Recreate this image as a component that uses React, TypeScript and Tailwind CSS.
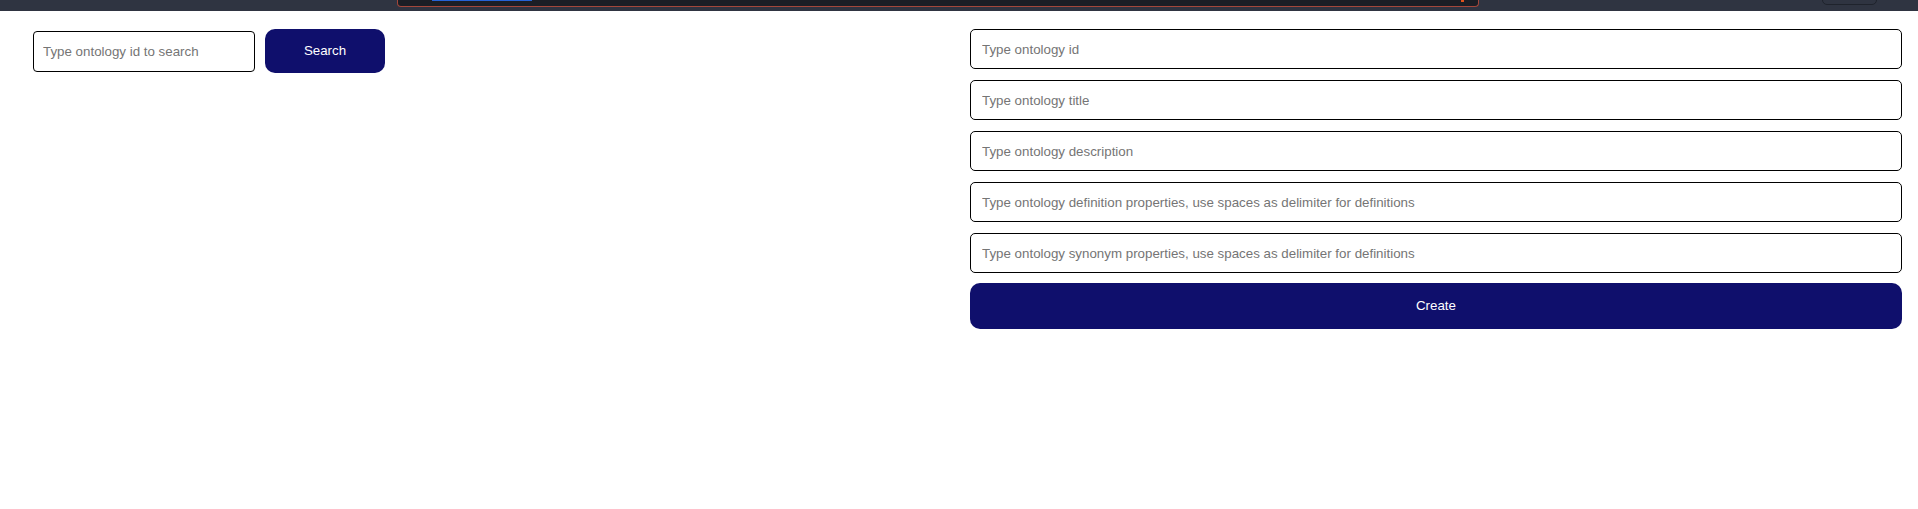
import React from "react";

const inputCls =
  "w-full h-[40px] border border-black rounded-[5px] px-[11px] text-[13.33px] text-black placeholder:text-[#757575] outline-none bg-white";

export default function App() {
  return (
    <div className="w-[1918px] h-[509px] bg-white font-['Liberation_Sans',Arial,sans-serif] overflow-hidden">
      <div className="relative h-[11px] bg-[#2f3441]">
        <div className="absolute left-[397px] top-0 w-[1082px] h-[7px] bg-[#1b1e25] border border-t-0 border-[#a3473b] rounded-b-[4px]">
          <div className="absolute left-[34px] top-0 w-[100px] h-[1px] bg-[#2563d6]" />
          <div className="absolute left-[1063px] top-0 w-[3px] h-[2px] bg-[#e0521c]" />
        </div>
        <div className="absolute left-[1822px] top-[-6px] w-[55px] h-[11px] border border-[#1f232c] rounded-[5px]" />
      </div>
      <div className="flex justify-between pl-[33px] pr-[16px] pt-[18px]">
        <div className="flex items-center gap-[10px] h-[44px]">
          <input
            className="w-[222px] h-[41px] border border-black rounded-[4px] px-[9px] text-[13.33px] placeholder:text-[#757575] outline-none"
            placeholder="Type ontology id to search"
          />
          <button className="w-[120px] h-[44px] rounded-[10px] bg-[#0f0f6c] text-white text-[13.33px]">
            Search
          </button>
        </div>
        <div className="w-[932px] flex flex-col gap-[11px]">
          <input className={inputCls} placeholder="Type ontology id" />
          <input className={inputCls} placeholder="Type ontology title" />
          <input className={inputCls} placeholder="Type ontology description" />
          <input
            className={inputCls}
            placeholder="Type ontology definition properties, use spaces as delimiter for definitions"
          />
          <input
            className={inputCls}
            placeholder="Type ontology synonym properties, use spaces as delimiter for definitions"
          />
          <button className="w-full h-[46px] mt-[-1px] rounded-[10px] bg-[#0f0f6c] text-white text-[13.33px]">
            Create
          </button>
        </div>
      </div>
    </div>
  );
}
